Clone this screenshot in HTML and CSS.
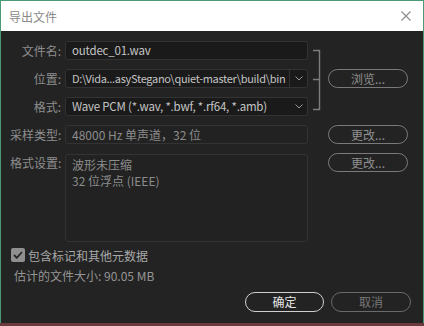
FILE: index.html
```html
<!DOCTYPE html>
<html lang="zh">
<head>
<meta charset="utf-8">
<link rel="stylesheet" href="styles.css">
</head>
<body>
<div class="win">
  <div class="titlebar">
    <span class="title">导出文件</span>
    <svg class="close" width="10" height="10" viewBox="0 0 10 10"><path d="M0.5 0.5L9.5 9.5M9.5 0.5L0.5 9.5" stroke="#8a8a8a" stroke-width="1.1" fill="none"/></svg>
  </div>
  <div class="body">
    <div class="form">
      <div class="lbl">文件名:</div>
      <div class="field val">outdec_01.wav</div>
      <svg class="bracket" width="20" height="75" viewBox="0 0 20 75"><path d="M5 9.5H11.5V68.5H5M5 38.5H11.5" stroke="#7c7c7c" stroke-width="1.4" fill="none"/></svg>
      <div></div>

      <div class="lbl">位置:</div>
      <div class="field val select split"><span class="txt path">D:\Vida...asyStegano\quiet-master\build\bin</span><span class="arrow sep"><svg width="8" height="5" viewBox="0 0 8 5"><path d="M0.5 0.5L4 4L7.5 0.5" stroke="#9a9a9a" stroke-width="1" fill="none"/></svg></span></div>
      <button class="btn">浏览...</button>

      <div class="lbl">格式:</div>
      <div class="field val select"><span class="txt">Wave PCM (*.wav, *.bwf, *.rf64, *.amb)</span><span class="arrow"><svg width="8" height="5" viewBox="0 0 8 5"><path d="M0.5 0.5L4 4L7.5 0.5" stroke="#9a9a9a" stroke-width="1" fill="none"/></svg></span></div>
      <div></div>

      <div class="lbl">采样类型:</div>
      <div class="field dim">48000 Hz 单声道，32 位</div>
      <div></div>
      <button class="btn">更改...</button>

      <div class="lbl top">格式设置:</div>
      <div class="box dim">波形未压缩<br>32 位浮点 (IEEE)</div>
      <div></div>
      <button class="btn top">更改...</button>
    </div>

    <label class="check">
      <span class="cbox"><svg width="10" height="8" viewBox="0 0 10 8"><path d="M1 4L3.8 6.8L9 1" stroke="#262626" stroke-width="1.8" fill="none"/></svg></span>
      <span>包含标记和其他元数据</span>
    </label>
    <div class="size">估计的文件大小: 90.05 MB</div>

    <div class="actions">
      <button class="btn primary">确定</button>
      <button class="btn cancel">取消</button>
    </div>
  </div>
</div>
</body>
</html>
```

FILE: styles.css
```css
html, body {
  margin: 0;
  padding: 0;
}
body {
  width: 424px;
  height: 326px;
  background: #6b3a3e;
  font-family: "Noto Sans CJK SC", "Noto Sans", sans-serif;
  font-size: 12px;
  overflow: hidden;
}
.win {
  width: 422px;
  height: 322px;
  border: 1px solid #4a9a78;
  border-bottom: none;
  display: flex;
  flex-direction: column;
  background: #232323;
}
.titlebar {
  height: 30px;
  background: #ffffff;
  display: flex;
  align-items: center;
  justify-content: space-between;
  padding: 0 12px 0 8px;
  flex: none;
}
.title {
  color: #8a8a8a;
  font-size: 12px;
}
.close {
  display: block;
}
.body {
  flex: 1;
  display: flex;
  flex-direction: column;
  padding: 10px 12px 0 9px;
}
.form {
  display: grid;
  grid-template-columns: 55px 243px 20px 80px;
  grid-template-rows: 19px 19px 19px 19px 89px;
  row-gap: 9px;
  margin-left: -9px;
  padding-left: 9px;
}
.form > :nth-child(n+16) {
  margin-top: 1px;
}
.lbl {
  color: #8e8e8e;
  text-align: right;
  padding-right: 4px;
  line-height: 19px;
  white-space: nowrap;
}
.lbl.top {
  line-height: 17px;
  padding-top: 1px;
}
.field {
  background: #1a1a1a;
  border: 1px solid #333333;
  border-radius: 3px;
  box-sizing: border-box;
  height: 19px;
  line-height: 17px;
  padding: 0 6px;
  white-space: nowrap;
  overflow: hidden;
}
.val {
  color: #c4c4c4;
  font-size: 11.5px;
  letter-spacing: -0.2px;
}
.path {
  font-size: 11px;
  letter-spacing: -0.3px;
}
.dim {
  color: #8c8c8c;
}
.field.dim {
  background: #222222;
}
.select {
  display: flex;
  padding-right: 0;
}
.select .txt {
  flex: 1;
  overflow: hidden;
}
.arrow {
  width: 17px;
  display: flex;
  align-items: center;
  justify-content: center;
  flex: none;
}
.arrow.sep {
  border-left: 1px solid #333333;
}
.bracket {
  grid-row: 1 / span 3;
  grid-column: 3;
  display: block;
}
.box {
  border: 1px solid #333333;
  border-radius: 3px;
  background: #222222;
  padding: 2px 6px;
  line-height: 16px;
  box-sizing: border-box;
  height: 88px;
}
.btn {
  font-family: inherit;
  font-size: 12px;
  height: 19px;
  line-height: 17px;
  padding: 0;
  margin: 0;
  border: 1px solid #7a7a7a;
  border-radius: 10px;
  background: transparent;
  color: #8e8e8e;
  box-sizing: border-box;
}
.btn.top {
  align-self: start;
  margin-top: 0;
}
.check {
  display: flex;
  align-items: center;
  gap: 3px;
  margin-top: 6px;
  height: 14px;
  color: #a8a8a8;
  font-size: 12px;
  margin-left: 1px;
}
.cbox {
  width: 14px;
  height: 14px;
  border-radius: 2px;
  background: #8f8f8f;
  display: flex;
  align-items: center;
  justify-content: center;
}
.size {
  margin-top: 6px;
  line-height: 16px;
  color: #959595;
  margin-left: 4px;
}
.actions {
  display: flex;
  justify-content: flex-end;
  gap: 7px;
  margin-top: 8px;
}
.actions .btn {
  width: 80px;
  height: 20px;
  line-height: 18px;
}
.btn.primary {
  width: 79px;
  border-color: #cfcfcf;
  color: #e6e6e6;
}
.btn.cancel {
  border-color: #6a6a6a;
  color: #777777;
}
```
